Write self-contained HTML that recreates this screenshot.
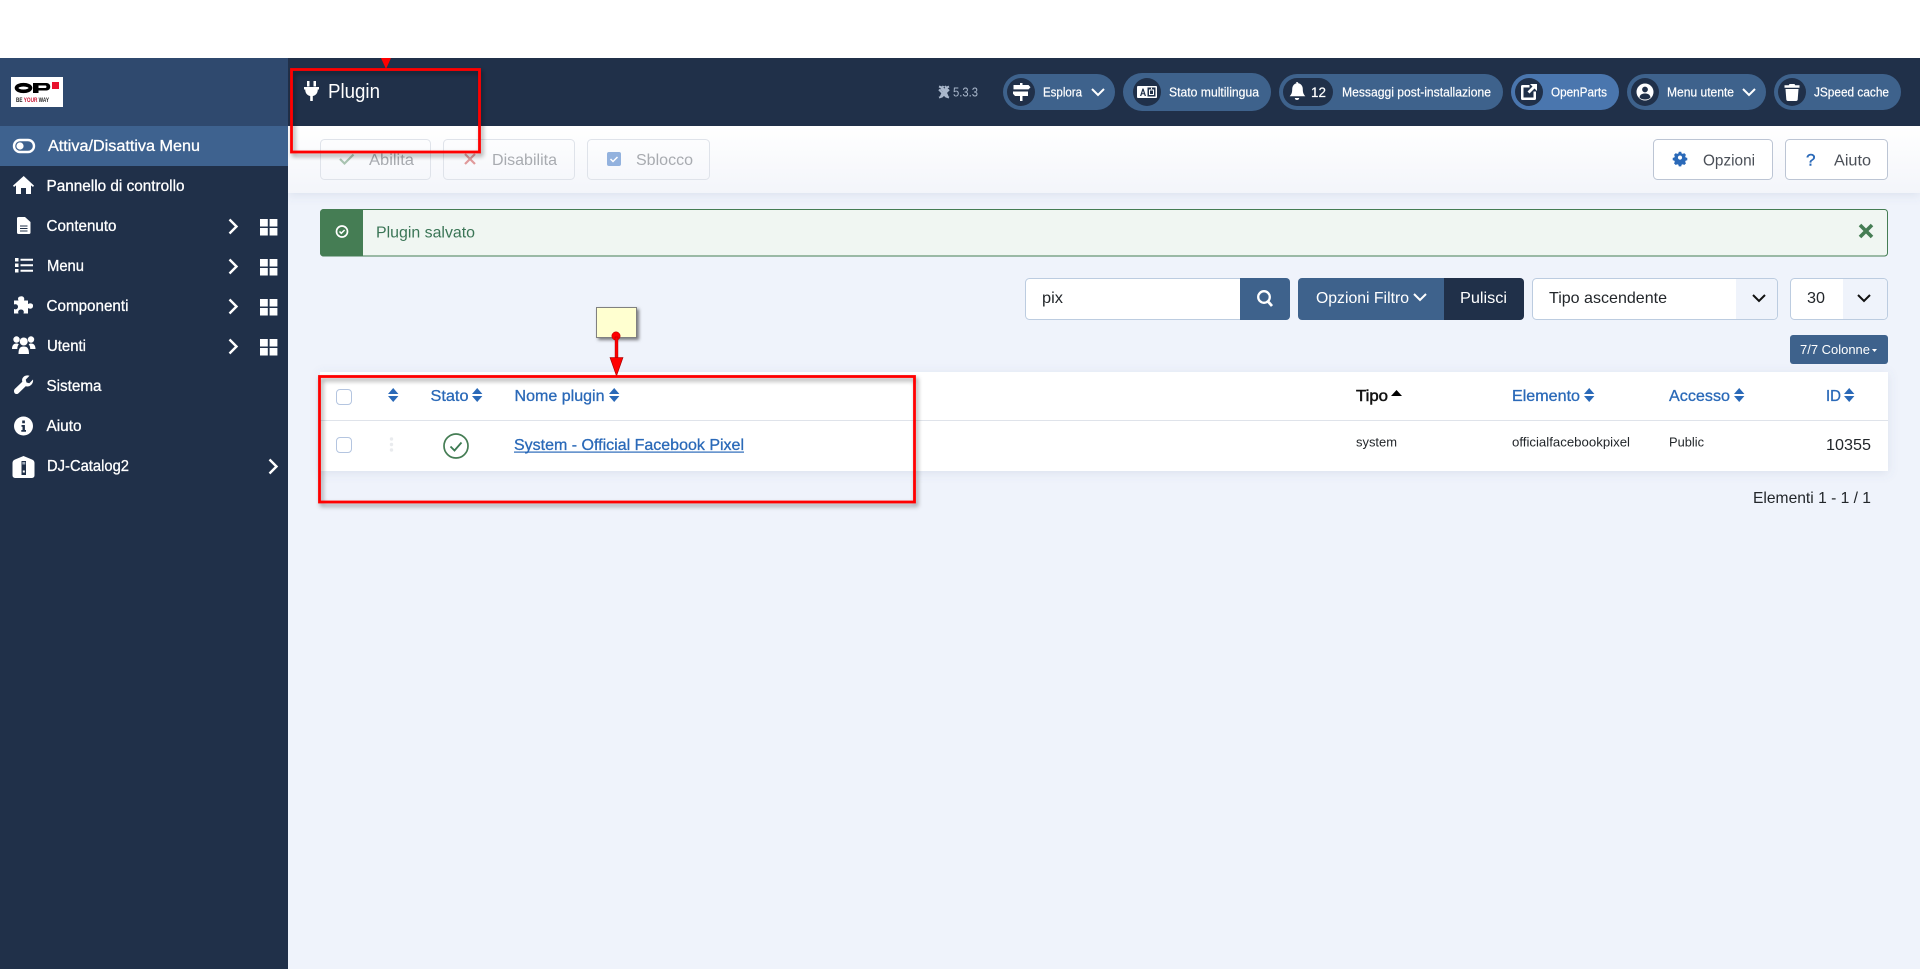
<!DOCTYPE html>
<html lang="it">
<head>
<meta charset="utf-8">
<title>Plugin</title>
<style>
html,body{margin:0;padding:0;background:#fff;width:1920px;height:969px;overflow:hidden}
svg{display:block}
text{font-family:"Liberation Sans",Arial,sans-serif}
.m{stroke-width:.3}
</style>
</head>
<body>
<svg width="1920" height="969" viewBox="0 0 1920 969" xmlns="http://www.w3.org/2000/svg">
<defs>
<linearGradient id="tb" x1="0" y1="0" x2="0" y2="1"><stop offset="0" stop-color="#fff"/><stop offset="1" stop-color="#f3f5fa"/></linearGradient>
<filter id="rs" x="-10%" y="-10%" width="120%" height="120%"><feDropShadow dx="2" dy="3" stdDeviation="2.5" flood-color="#000" flood-opacity=".4"/></filter>
<filter id="ts" x="-5%" y="-30%" width="110%" height="160%"><feDropShadow dx="0" dy="2" stdDeviation="5" flood-color="#5a6f96" flood-opacity=".14"/></filter>
<filter id="ns" x="-20%" y="-20%" width="140%" height="140%"><feDropShadow dx="2" dy="2" stdDeviation="1.500" flood-color="#000" flood-opacity=".5"/></filter>
<g id="sort"><path d="M5.200 0 10.400 6H0Z M0 8H10.400L5.200 14Z"/></g>
<g id="grid" fill="#fff"><rect width="7.800" height="7.500"/><rect x="9.600" width="7.800" height="7.500"/><rect y="9" width="7.800" height="7.500"/><rect x="9.600" y="9" width="7.800" height="7.500"/></g>
<path id="chev" d="M-3.500 -7 3.500 0 -3.500 7" fill="none" stroke="#fff" stroke-width="2.400"/>
<path id="chd" d="M-6 -3 0 3 6 -3" fill="none" stroke-width="2"/>
</defs>

<!-- page -->
<rect width="1920" height="969" fill="#eff3fb"/>
<rect width="1920" height="58" fill="#fff"/>

<!-- toolbar -->
<rect x="288" y="126" width="1632" height="67" fill="url(#tb)" filter="url(#ts)"/>

<!-- topbar -->
<rect x="288" y="58" width="1632" height="68" fill="#203049"/>

<!-- sidebar -->
<rect x="0" y="58" width="288" height="911" fill="#203049"/>
<rect x="0" y="58" width="288" height="68" fill="#2f496e"/>
<rect x="0" y="126" width="288" height="40" fill="#3e628f"/>
<rect x="11" y="77" width="52" height="30" fill="#fff"/>
<ellipse cx="23.500" cy="88" rx="7" ry="3.300" fill="none" stroke="#000" stroke-width="3.600"/>
<path d="M33 83H46.500C51.500 83 51.500 90.500 46.500 90.500H38.500V93H33ZM38.500 85.500V88H45.500C46.800 88 46.800 85.500 45.500 85.500Z" fill="#000" fill-rule="evenodd"/>
<rect x="52" y="82" width="7" height="7" fill="#e8112d"/>
<text x="16" y="102" font-size="6" font-weight="700" fill="#222" textLength="33" lengthAdjust="spacingAndGlyphs">BE <tspan fill="#c8102e">YOUR</tspan> WAY</text>

<g fill="#fff">
<!-- toggle -->
<rect x="14" y="140" width="20" height="12" rx="6" fill="#3e628f" stroke="#fff" stroke-width="2.400"/>
<circle cx="20" cy="146" r="3.600"/>
<!-- home -->
<path d="M23.700 176 34 185.600 33 187 31 185.400V194H26V188H21V194H16V185.400L14 187 13 185.600Z"/>
<!-- file -->
<path d="M18.500 217H25L30.500 222V232.500A1.500 1.500 0 0 1 29 234H18.500A1.500 1.500 0 0 1 17 232.500V218.500A1.500 1.500 0 0 1 18.500 217Z"/>
<path d="M20 226H27.500M20 228.500H27.500M20 231H27.500" stroke="#203049" stroke-width=".9"/>
<!-- list -->
<path d="M15 258h3.500v3.500H15zM15 263.500h3.500V267H15zM15 269h3.500v3.500H15zM20.500 258.800H33v2H20.500zM20.500 264.300H33v2H20.500zM20.500 269.800H33v2H20.500z"/>
<!-- puzzle -->
<path d="M20 296.500C23 295.500 25 297.500 24 300.500H28V304C31 302.500 33.500 304 33 306C33 308.500 30.500 309.500 28 308V313.500H23.500C24.500 311 23 309.500 21 309.500C19 309.500 17.500 311 18.500 313.500H14V309C16.500 310 18 308.500 18 306.800C18 305 16.500 303.700 14 304.500V300.500H18.500C17.500 298.500 18 297 20 296.500Z"/>
<!-- users -->
<circle cx="16.500" cy="339.500" r="3.200"/><circle cx="31" cy="339.500" r="3.200"/><circle cx="23.700" cy="341.500" r="4"/>
<path d="M12 349C12 345 14 343.500 16.500 343.500C17.500 343.500 18.300 343.800 18.800 344.300C17.800 345.500 17.300 347 17.300 349Z M35.500 349C35.500 345 33.500 343.500 31 343.500C30 343.500 29.200 343.800 28.700 344.300C29.700 345.500 30.200 347 30.200 349Z M18.500 354C18.500 348.500 20 346.500 23.700 346.500C27.500 346.500 29 348.500 29 354Z"/>
<!-- wrench -->
<path d="M33 379.500C33.700 383.500 30 387.500 25.700 386.300L18.500 393.300C17 394.700 14 394.300 14 391C14 390 14.500 389.300 15 388.800L22.300 381.800C21 377.500 25.500 374.300 29.500 375.800L25.700 379.600 26.500 382.500 29.300 383.300Z"/>
<!-- info -->
<circle cx="23.500" cy="426" r="9.500"/>
<path d="M22.200 420.500h2.700v2.700h-2.700zM21.500 425h3.400v5h1.100v1.800H21.300V430h1.200v-3.200h-1z" fill="#203049"/>
<!-- DJ -->
<path d="M23.500 456 32 459.500Q34.500 460.500 34.500 463V475.500A2.500 2.500 0 0 1 32 478H15A2.500 2.500 0 0 1 12.500 475.500V463Q12.500 460.500 15 459.500Z"/>
<rect x="21.500" y="461" width="4.500" height="14" fill="#203049"/><rect x="22.300" y="462" width="3" height="2.500" fill="#9aa6b6"/><rect x="22.800" y="470.500" width="2" height="2" fill="#fff"/>
</g>

<g fill="#fff" stroke="#fff" class="m" font-size="16">
<text x="48" y="151" textLength="152" lengthAdjust="spacingAndGlyphs">Attiva/Disattiva Menu</text>
<text x="46.500" y="191" textLength="138" lengthAdjust="spacingAndGlyphs">Pannello di controllo</text>
<text x="46.500" y="231" textLength="70" lengthAdjust="spacingAndGlyphs">Contenuto</text>
<text x="47" y="271" textLength="37" lengthAdjust="spacingAndGlyphs">Menu</text>
<text x="46.500" y="311" textLength="82" lengthAdjust="spacingAndGlyphs">Componenti</text>
<text x="47" y="351" textLength="39" lengthAdjust="spacingAndGlyphs">Utenti</text>
<text x="46.500" y="391" textLength="55" lengthAdjust="spacingAndGlyphs">Sistema</text>
<text x="46.500" y="431" textLength="35" lengthAdjust="spacingAndGlyphs">Aiuto</text>
<text x="47" y="471" textLength="82" lengthAdjust="spacingAndGlyphs">DJ-Catalog2</text>
</g>
<use href="#chev" x="233" y="226.500"/><use href="#chev" x="233" y="266.500"/><use href="#chev" x="233" y="306.500"/><use href="#chev" x="233" y="346.500"/><use href="#chev" x="273" y="466.500"/>
<use href="#grid" x="260" y="219"/><use href="#grid" x="260" y="259"/><use href="#grid" x="260" y="299"/><use href="#grid" x="260" y="339"/>

<!-- title -->
<path d="M307 81h2.500v5.500H307zM313.500 81h2.500v5.500h-2.500zM304 87h15v2.500h-1.200c0 3.500-2 6-5 6.500V101h-2.600v-5c-3-.5-5-3-5-6.500H304Z" fill="#fff"/>
<text x="328" y="98" font-size="20" fill="#fff" textLength="52" lengthAdjust="spacingAndGlyphs">Plugin</text>

<!-- version -->
<path d="M939 86.500l3 1 2.500 2.500 2.500-2.500 2-1M939 97.500l3-1 5-5 2-2M949 97.500l-3-1-5-5-2-2M943.500 86l-2 3 5 5 1.500 3.500M945 86l2 3-5 5-1.500 3.500" fill="none" stroke="#a9b7cb" stroke-width="2"/>
<text x="953" y="96.500" font-size="13" fill="#a9b7cb" textLength="25" lengthAdjust="spacingAndGlyphs">5.3.3</text>

<!-- pills -->
<g fill="#3e628c">
<rect x="1003" y="74" width="112" height="36" rx="18"/>
<rect x="1123" y="73" width="148" height="38" rx="19"/>
<rect x="1279" y="74" width="224" height="36" rx="18"/>
<rect x="1511" y="74" width="108" height="36" rx="18" fill="#4a76ae"/>
<rect x="1627" y="74" width="139" height="36" rx="18"/>
<rect x="1774" y="74" width="127" height="36" rx="18"/>
</g>
<g fill="#203049">
<circle cx="1021" cy="92" r="14"/><circle cx="1147" cy="92" r="14"/><rect x="1283" y="78" width="50" height="28" rx="14"/><circle cx="1529" cy="92" r="14"/><circle cx="1645" cy="92" r="14"/><circle cx="1792" cy="92" r="14"/>
</g>
<g fill="#fff">
<!-- signs -->
<path d="M1020 83h2.500v2h6l2 2.200-2 2.200h-15V85h6.500zM1013 91.500h15v4.500h-5.500v5h-2.500v-5h-5l-2-2.200z"/>
<!-- language -->
<rect x="1137" y="86" width="20" height="12" rx="1"/>
<rect x="1147.500" y="87.500" width="8" height="9" fill="#203049"/>
<rect x="1149.500" y="90" width="4" height="4.500" fill="none" stroke="#fff" stroke-width="1"/><path d="M1151 87.800h1v1.500h-1z"/>
<path d="M1140 96l2.500-7.500h1L1146 96h-1.300l-.6-1.800h-2.200l-.6 1.800zM1142.200 93.300h1.600l-.8-2.600z" fill="#203049"/>
<!-- bell -->
<path d="M1297 82c.8 0 1.300.6 1.300 1.300 3 .6 4.500 3 4.500 6 0 4 1.200 5.500 2.500 7H1289.700c1.300-1.500 2.500-3 2.500-7 0-3 1.500-5.400 4.500-6C1295.700 82.600 1296.200 82 1297 82zM1294.800 98h4.400c0 1.200-1 2-2.200 2s-2.200-.8-2.200-2z"/>
<!-- external -->
<path d="M1523.500 85h6v2.500h-6v10h10v-6h2.500v7a1.500 1.500 0 0 1-1.500 1.500h-12a1.500 1.500 0 0 1-1.500-1.500v-12a1.500 1.500 0 0 1 1.500-1.500z M1530 84h7v7l-2.500-2.500-5 5-2-2 5-5z"/>
<!-- user -->
<circle cx="1645" cy="92" r="8.500"/>
<circle cx="1645" cy="89.500" r="2.900" fill="#203049"/><path d="M1639.500 97.500c.5-3 2.500-4 5.500-4s5 1 5.500 4c-1.500 1.500-3.300 2-5.500 2s-4-.5-5.500-2z" fill="#203049"/>
<!-- trash -->
<path d="M1789.500 84h5l.7 1.300h4.300v2.500h-15v-2.500h4.300zM1785.500 89h13l-.8 10.500a1.700 1.700 0 0 1-1.700 1.500h-8a1.700 1.700 0 0 1-1.700-1.500z"/>
</g>
<use href="#chd" x="1098" y="92" stroke="#fff" stroke-width="2.600"/>
<use href="#chd" x="1749" y="92" stroke="#fff" stroke-width="2.600"/>
<g fill="#fff" font-size="13" stroke="#fff" class="m" style="stroke-width:.2">
<text x="1043" y="96.500" textLength="39" lengthAdjust="spacingAndGlyphs">Esplora</text>
<text x="1169" y="96.500" textLength="90" lengthAdjust="spacingAndGlyphs">Stato multilingua</text>
<text x="1311" y="97" font-size="14" textLength="15" lengthAdjust="spacingAndGlyphs">12</text>
<text x="1342" y="96.500" textLength="149" lengthAdjust="spacingAndGlyphs">Messaggi post-installazione</text>
<text x="1551" y="96.500" textLength="56" lengthAdjust="spacingAndGlyphs">OpenParts</text>
<text x="1667" y="96.500" textLength="67" lengthAdjust="spacingAndGlyphs">Menu utente</text>
<text x="1814" y="96.500" textLength="75" lengthAdjust="spacingAndGlyphs">JSpeed cache</text>
</g>

<!-- toolbar buttons -->
<g fill="none" stroke="#dfe3ea" stroke-width="1">
<rect x="320.500" y="139.500" width="110" height="40" rx="4"/>
<rect x="443.500" y="139.500" width="131" height="40" rx="4"/>
<rect x="587.500" y="139.500" width="122" height="40" rx="4"/>
</g>
<path d="M340 159l4.500 4.500 9-9" fill="none" stroke="#a9c4b1" stroke-width="2.200"/>
<path d="M465 154l10 10M475 154l-10 10" fill="none" stroke="#e09a9a" stroke-width="2.200"/>
<rect x="607" y="152" width="14" height="14" rx="2" fill="#93b2de"/><path d="M610.500 159l2.500 2.500 4.500-4.500" fill="none" stroke="#fff" stroke-width="1.500"/>
<g font-size="16" fill="#a8abb0">
<text x="369" y="165" textLength="45" lengthAdjust="spacingAndGlyphs">Abilita</text>
<text x="492" y="165" textLength="65" lengthAdjust="spacingAndGlyphs">Disabilita</text>
<text x="636" y="165" textLength="57" lengthAdjust="spacingAndGlyphs">Sblocco</text>
</g>
<g fill="#fff" stroke="#bcc5d4">
<rect x="1653.500" y="139.500" width="119" height="40" rx="4"/>
<rect x="1785.500" y="139.500" width="102" height="40" rx="4"/>
</g>
<path d="M1678.300 151.500h3.400l.5 2.200 1.700.7 2-1.100 2.400 2.400-1.100 2 .7 1.700 2.200.5v3.400l-2.200.5-.7 1.700 1.100 2-2.400 2.400-2-1.100-1.700.7-.5 2.200h-3.400l-.5-2.200-1.700-.7-2 1.100-2.400-2.400 1.100-2-.7-1.700-2.200-.5v-3.400l2.200-.5.7-1.700-1.100-2 2.400-2.400 2 1.100 1.700-.7zM1680 156.600a2.900 2.900 0 1 0 .01 0z" fill="#2a69b8" fill-rule="evenodd" transform="translate(1680 159) scale(.72) translate(-1680 -161.500)"/>
<text x="1806" y="165.500" font-size="17" fill="#2a69b8" stroke="#2a69b8" stroke-width=".4" textLength="9.500" lengthAdjust="spacingAndGlyphs">?</text>
<g font-size="16" fill="#4a4f57">
<text x="1703" y="165.500" textLength="52" lengthAdjust="spacingAndGlyphs">Opzioni</text>
<text x="1834" y="165.500" textLength="37" lengthAdjust="spacingAndGlyphs">Aiuto</text>
</g>

<!-- alert -->
<rect x="320.500" y="209.500" width="1567" height="46.500" rx="3" fill="#f0f6f2" stroke="#457d54"/>
<path d="M320 213a4 4 0 0 1 4-4h39v47.500h-39a4 4 0 0 1-4-4z" fill="#457d54"/>
<circle cx="342" cy="231.500" r="5.500" fill="none" stroke="#fff" stroke-width="1.700"/>
<path d="M339.500 231.500l1.800 1.800 3.300-3.300" fill="none" stroke="#fff" stroke-width="1.500"/>
<text x="376" y="237.500" font-size="16" fill="#3a7556" textLength="99" lengthAdjust="spacingAndGlyphs">Plugin salvato</text>
<path d="M1860 225l12 12M1872 225l-12 12" fill="none" stroke="#457d54" stroke-width="3.600"/>

<!-- filter row -->
<rect x="1025.500" y="278.500" width="264" height="41" rx="4" fill="#fff" stroke="#bccce0"/>
<path d="M1240 278h46a4 4 0 0 1 4 4v34a4 4 0 0 1-4 4h-46z" fill="#3e628c"/>
<circle cx="1264" cy="297" r="5.800" fill="none" stroke="#fff" stroke-width="2.300"/><path d="M1268 301.500l4 4.500" stroke="#fff" stroke-width="2.800"/>
<text x="1042" y="303" font-size="16" fill="#22262a" textLength="21" lengthAdjust="spacingAndGlyphs">pix</text>
<path d="M1302 278h142v42h-142a4 4 0 0 1-4-4v-34a4 4 0 0 1 4-4z" fill="#3e628c"/>
<path d="M1444 278h76a4 4 0 0 1 4 4v34a4 4 0 0 1-4 4h-76z" fill="#203049"/>
<text x="1316" y="303" font-size="16" fill="#fff" textLength="93" lengthAdjust="spacingAndGlyphs">Opzioni Filtro</text>
<use href="#chd" x="1420" y="297" stroke="#fff" stroke-width="2"/>
<text x="1460" y="303" font-size="16" fill="#fff" textLength="47" lengthAdjust="spacingAndGlyphs">Pulisci</text>

<rect x="1532.500" y="278.500" width="245" height="41" rx="4" fill="#fff" stroke="#bccce0"/>
<path d="M1736 279h37a4 4 0 0 1 4 4v32a4 4 0 0 1-4 4h-37z" fill="#eff3fb"/>
<text x="1549" y="303" font-size="16" fill="#22262a" textLength="118" lengthAdjust="spacingAndGlyphs">Tipo ascendente</text>
<use href="#chd" x="1759" y="298" stroke="#111" stroke-width="2"/>
<rect x="1790.500" y="278.500" width="97" height="41" rx="4" fill="#fff" stroke="#bccce0"/>
<path d="M1843 279h40a4 4 0 0 1 4 4v32a4 4 0 0 1-4 4h-40z" fill="#eff3fb"/>
<text x="1807" y="303" font-size="16" fill="#22262a" textLength="18" lengthAdjust="spacingAndGlyphs">30</text>
<use href="#chd" x="1864" y="298" stroke="#111" stroke-width="2"/>

<rect x="1790" y="335" width="98" height="29" rx="3" fill="#3e628c"/>
<text x="1800" y="354" font-size="13" fill="#fff" textLength="70" lengthAdjust="spacingAndGlyphs">7/7 Colonne</text>
<path d="M1872 349h5l-2.500 3z" fill="#fff"/>

<!-- table -->
<rect x="320" y="372" width="1568" height="99" fill="#fff" filter="url(#ts)"/>
<rect x="320" y="420" width="1568" height="1" fill="#dfe3ea"/>
<rect x="336.500" y="389.500" width="15" height="15" rx="3.500" fill="#fff" stroke="#b4c5e0"/>
<rect x="336.500" y="437.500" width="15" height="15" rx="3.500" fill="#fff" stroke="#b4c5e0"/>
<g fill="#2a69b8">
<use href="#sort" x="388" y="388"/><use href="#sort" x="472" y="388"/><use href="#sort" x="609" y="388"/><use href="#sort" x="1584" y="388"/><use href="#sort" x="1734" y="388"/><use href="#sort" x="1844" y="388"/>
</g>
<g fill="#2a69b8" stroke="#2a69b8" class="m" font-size="16">
<text x="430.500" y="401" textLength="38" lengthAdjust="spacingAndGlyphs">Stato</text>
<text x="514.500" y="401" textLength="90" lengthAdjust="spacingAndGlyphs">Nome plugin</text>
<text x="1512" y="401" textLength="68" lengthAdjust="spacingAndGlyphs">Elemento</text>
<text x="1669" y="401" textLength="61" lengthAdjust="spacingAndGlyphs">Accesso</text>
<text x="1826" y="401" textLength="15" lengthAdjust="spacingAndGlyphs">ID</text>
</g>
<text x="1356" y="401" font-size="16" fill="#111" stroke="#111" stroke-width=".5" textLength="32" lengthAdjust="spacingAndGlyphs">Tipo</text>
<path d="M1391 396l5.500-6 5.500 6z" fill="#000"/>
<circle cx="391.500" cy="439" r="1.700" fill="#e9ebee"/><circle cx="391.500" cy="444.500" r="1.700" fill="#e9ebee"/><circle cx="391.500" cy="450" r="1.700" fill="#e9ebee"/>
<circle cx="456" cy="446" r="12" fill="#fff" stroke="#457d54" stroke-width="1.700"/>
<path d="M450.500 446.500l4 4 7-8" fill="none" stroke="#3c7a52" stroke-width="1.800"/>
<text x="514" y="450" font-size="16" fill="#2a69b8" stroke="#2a69b8" class="m" textLength="230" lengthAdjust="spacingAndGlyphs">System - Official Facebook Pixel</text>
<rect x="514" y="451.500" width="230" height="1.200" fill="#2a69b8"/>
<g font-size="13" fill="#22262a">
<text x="1356" y="446.500" textLength="41" lengthAdjust="spacingAndGlyphs">system</text>
<text x="1512" y="446.500" textLength="118" lengthAdjust="spacingAndGlyphs">officialfacebookpixel</text>
<text x="1669" y="446.500" textLength="35" lengthAdjust="spacingAndGlyphs">Public</text>
</g>
<text x="1826" y="450" font-size="16" fill="#22262a" textLength="45" lengthAdjust="spacingAndGlyphs">10355</text>
<text x="1753" y="503" font-size="16" fill="#22262a" textLength="118" lengthAdjust="spacingAndGlyphs">Elementi 1 - 1 / 1</text>

<!-- annotations -->
<rect x="596.500" y="307.500" width="40" height="30" fill="#ffffd0" stroke="#808080" filter="url(#ns)"/>
<circle cx="616" cy="336" r="4.200" fill="#ff0000" stroke="#a00" stroke-width=".5"/>
<rect x="615" y="337" width="3" height="22" fill="#ff0000" stroke="#900" stroke-width=".4"/>
<path d="M610 357.500H623L616.500 376Z" fill="#ff0000" stroke="#900" stroke-width=".6"/>
<rect x="291.500" y="69.500" width="188" height="82.500" fill="none" stroke="#ff0000" stroke-width="2.800" filter="url(#rs)"/>
<path d="M381 58H391L386 69Z" fill="#ff0000"/>
<rect x="319.500" y="376.500" width="595" height="125.500" fill="none" stroke="#ff0000" stroke-width="2.800" filter="url(#rs)"/>
</svg>
</body>
</html>
